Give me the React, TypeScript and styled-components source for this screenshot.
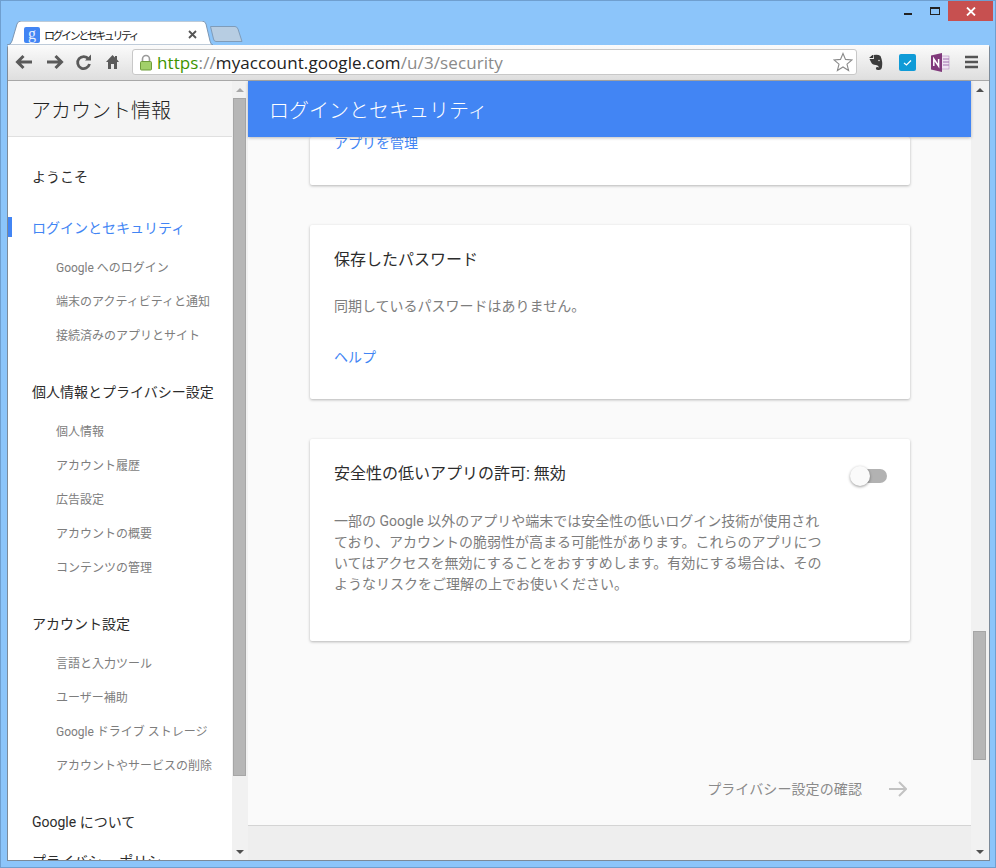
import React from 'react';
import styled, {createGlobalStyle} from 'styled-components';

const GlobalStyle = createGlobalStyle`
    html, body {
        margin: 0;
        padding: 0;
        background: #8cc5fa;
    }
    * {
        box-sizing: border-box;
    }
`;

const Frame = styled.div`
    width: 996px;
    height: 868px;
    display: flex;
    flex-direction: column;
    padding: 0 5px 6px 6px;
    background: #8cc5fa;
    border: 1px solid #6f9fcf;
    font-family: Roboto, "Noto Sans CJK JP", sans-serif;
    overflow: hidden;
`;

const TitleBar = styled.div`
    height: 44px;
    flex: none;
    display: flex;
    justify-content: space-between;
    align-items: flex-start;
`;

const TabStrip = styled.div`
    display: flex;
    align-items: flex-end;
    height: 44px;
    margin-left: -1px;
`;

const Tab = styled.div`
    position: relative;
    width: 207px;
    height: 24px;
    padding: 3px 16px 0 18px;
    display: flex;
    align-items: center;
    gap: 4px;
`;

const TabShape = styled.svg`
    position: absolute;
    left: 0;
    top: 0;
`;

const Favicon = styled.div`
    position: relative;
    width: 16px;
    height: 16px;
    background: #4285f4;
    border-radius: 2px;
    color: #e8f0fe;
    font: 400 16px/14px "Liberation Serif", serif;
    text-align: center;
`;

const TabTitle = styled.span`
    position: relative;
    flex: 1;
    font-size: 11px;
    letter-spacing: -2.45px;
    color: #222;
    white-space: nowrap;
`;

const TabClose = styled.svg`
    position: relative;
`;

const NewTab = styled.svg`
    margin-left: -3px;
    margin-bottom: 3px;
`;

const WindowButtons = styled.div`
    display: flex;
    align-items: flex-start;
    margin-right: -3px;
`;

const WindowGlyph = styled.svg`
    width: 26px;
    height: 20px;
`;

const CloseButton = styled.div`
    width: 45px;
    height: 20px;
    background: #c75050;
    display: flex;
    align-items: center;
    justify-content: center;
`;

const Browser = styled.div`
    flex: 1;
    min-height: 0;
    display: flex;
    flex-direction: column;
    border: 1px solid #7c8a99;
    border-top: none;
    border-radius: 3px 3px 0 0;
    background: #fff;
`;

const Toolbar = styled.div`
    height: 36px;
    flex: none;
    display: flex;
    align-items: center;
    padding: 0 6px 1px 6px;
    background: linear-gradient(#fbfbfb, #dedede);
    border-bottom: 1px solid #a8a8a8;
`;

const NavButton = styled.svg`
    width: 29px;
    height: 24px;
    flex: none;
`;

const Omnibox = styled.div`
    width: 725px;
    height: 26px;
    margin-left: 2px;
    display: flex;
    align-items: center;
    padding: 0 3px 0 6px;
    background: #fff;
    border: 1px solid #c8c8c8;
    border-radius: 3px;
`;

const Url = styled.div`
    flex: 1;
    margin-left: 4px;
    font-family: "Open Sans", sans-serif;
    font-size: 17px;
    letter-spacing: 0.1px;
    white-space: nowrap;
    color: #222;
`;

const UrlPart = styled.span<{$tone: 'green' | 'gray'}>`
    color: ${p => (p.$tone === 'green' ? '#3d9400' : '#8a8a8a')};
`;

const Extensions = styled.div`
    display: flex;
    align-items: center;
    gap: 15px;
    margin-left: 11px;
`;

const Viewport = styled.div`
    flex: 1;
    min-height: 0;
    display: flex;
`;

const Sidebar = styled.aside`
    width: 224px;
    flex: none;
    display: flex;
    flex-direction: column;
    overflow: hidden;
    background: #fff;
`;

const SidebarHeader = styled.div`
    height: 56px;
    flex: none;
    padding: 2px 0 0 23px;
    display: flex;
    align-items: center;
    background: #f5f5f5;
    border-bottom: 1px solid #e0e0e0;
    font-size: 20px;
    font-weight: 300;
    color: #212121;
`;

const SidebarList = styled.div`
    padding-top: 22px;
`;

const NavGroup = styled.div<{$gap?: number}>`
    margin-bottom: ${p => p.$gap ?? 23}px;
`;

const NavHead = styled.div<{$active?: boolean}>`
    position: relative;
    height: 34px;
    margin-bottom: 5px;
    padding-left: 24px;
    display: flex;
    align-items: center;
    font-size: 14px;
    white-space: nowrap;
    color: ${p => (p.$active ? '#4285f4' : '#2c2c2c')};

    &::before {
        content: '';
        display: ${p => (p.$active ? 'block' : 'none')};
        position: absolute;
        left: 0;
        top: 7px;
        width: 4px;
        height: 20px;
        background: #4285f4;
    }
`;

const NavSub = styled.div`
    height: 34px;
    padding-left: 48px;
    display: flex;
    align-items: center;
    font-size: 12px;
    white-space: nowrap;
    color: #7d7d7d;
`;

const Scrollbar = styled.div<{$width: number}>`
    width: ${p => p.$width}px;
    flex: none;
    display: flex;
    flex-direction: column;
    background: #f1f1f1;
`;

const ScrollArrow = styled.div<{$down?: boolean; $pale?: boolean}>`
    height: 17px;
    flex: none;
    display: flex;
    align-items: center;
    justify-content: center;

    &::before {
        content: '';
        border-left: 4px solid transparent;
        border-right: 4px solid transparent;
        ${p => (p.$down ? 'border-top' : 'border-bottom')}: 4px solid ${p => (p.$pale ? '#a8a8a8' : '#505050')};
    }
`;

const ScrollTrack = styled.div<{$inset: number}>`
    flex: 1;
    min-height: 0;
    padding-left: ${p => p.$inset}px;
`;

const ScrollThumb = styled.div<{$top: number; $height: number}>`
    width: 13px;
    height: ${p => p.$height}px;
    margin-top: ${p => p.$top}px;
    background: #b6b6b6;
    border: 1px solid #a6a6a6;
`;

const Main = styled.main`
    flex: 1;
    min-width: 0;
    display: flex;
    flex-direction: column;
    background: #fafafa;
`;

const MainHeader = styled.header`
    position: relative;
    z-index: 1;
    height: 56px;
    flex: none;
    padding: 1px 0 0 21px;
    display: flex;
    align-items: center;
    background: #4285f4;
    box-shadow: 0 1px 3px rgba(0, 0, 0, 0.25);
    font-size: 20px;
    font-weight: 300;
    color: #fff;
`;

const MainBody = styled.div`
    flex: 1;
    min-height: 0;
    overflow: hidden;
    padding: 0 62px;
    display: flex;
    flex-direction: column;
    gap: 40px;
`;

const Card = styled.section<{$top?: number; $bottom?: number}>`
    width: 600px;
    flex: none;
    padding: ${p => p.$top ?? 23}px 24px ${p => p.$bottom ?? 31}px;
    background: #fff;
    border-radius: 2px;
    box-shadow: 0 1px 3px rgba(0, 0, 0, 0.28);
`;

const CardTitle = styled.h2`
    margin: 0;
    font-size: 16px;
    font-weight: 400;
    line-height: 24px;
    color: #2c2c2c;
`;

const CardText = styled.p<{$gap?: number}>`
    margin: ${p => p.$gap ?? 25}px 0 0;
    font-size: 14px;
    line-height: 21px;
    color: #7d7d7d;
    white-space: nowrap;
`;

const CardLink = styled.a<{$tight?: boolean}>`
    display: block;
    margin-top: ${p => (p.$tight ? -4 : 30)}px;
    font-size: 14px;
    line-height: 21px;
    color: #4285f4;
`;

const TitleRow = styled.div`
    display: flex;
    justify-content: space-between;
    align-items: center;
`;

const Toggle = styled.div`
    position: relative;
    width: 37px;
    height: 20px;
    margin: 4px -1px 0 0;
    display: flex;
    align-items: center;
    justify-content: flex-end;
`;

const ToggleTrack = styled.div`
    width: 30px;
    height: 14px;
    background: #b2b2b2;
    border-radius: 7px;
`;

const ToggleThumb = styled.div`
    position: absolute;
    left: 0;
    top: 0;
    width: 20px;
    height: 20px;
    background: #fafafa;
    border-radius: 50%;
    box-shadow: 0 1px 3px rgba(0, 0, 0, 0.4);
`;

const NextLink = styled.div`
    margin-top: 96px;
    width: 597px;
    flex: none;
    display: flex;
    justify-content: flex-end;
    align-items: center;
    gap: 27px;
    font-size: 14px;
    line-height: 24px;
    letter-spacing: 0.1px;
    color: #8a8a8a;
`;

const MainFooter = styled.footer`
    height: 35px;
    flex: none;
    background: #eeeeee;
    border-top: 1px solid #d4d4d4;
`;

const BackIcon = () => (
    <NavButton viewBox="0 0 29 24">
        <path d="M9.5 6 L3.5 12 L9.5 18 M4 12 H18" fill="none" stroke="#5a5a5a" strokeWidth="3" />
    </NavButton>
);

const ForwardIcon = () => (
    <NavButton viewBox="0 0 29 24">
        <path d="M12.5 6 L18.5 12 L12.5 18 M4 12 H18" fill="none" stroke="#5a5a5a" strokeWidth="3" />
    </NavButton>
);

const ReloadIcon = () => (
    <NavButton viewBox="0 0 29 24">
        <path d="M16.5 9 A6 6 0 1 0 17.5 14" fill="none" stroke="#5a5a5a" strokeWidth="2.8" />
        <path d="M13 10.5 H19 V4.5 Z" fill="#5a5a5a" />
    </NavButton>
);

const HomeIcon = () => (
    <NavButton viewBox="0 0 29 24">
        <path d="M11.5 5 L5 12 H7 V19 H10 V14 H13 V19 H16 V12 H18 L16 9.5 V6 H14 V7.5 Z" fill="#5a5a5a" />
    </NavButton>
);

const LockIcon = () => (
    <svg width="14" height="17" viewBox="0 0 14 17">
        <path d="M3.5 8 V5 A3.5 3.5 0 0 1 10.5 5 V8" fill="none" stroke="#9a9a9a" strokeWidth="1.6" />
        <rect x="1.5" y="7.5" width="11" height="8.5" rx="1" fill="#a2d06a" stroke="#6f9d3c" />
    </svg>
);

const StarIcon = () => (
    <svg width="20" height="20" viewBox="0 0 20 20">
        <path d="M10 1.5 L12.5 7.4 L19 7.9 L14 12.1 L15.6 18.5 L10 15 L4.4 18.5 L6 12.1 L1 7.9 L7.5 7.4 Z" fill="#fff" stroke="#8a8a8a" strokeWidth="1.1" />
    </svg>
);

const EvernoteIcon = () => (
    <svg width="16" height="17" viewBox="0 0 16 17">
        <path d="M1 4 L4.5 1 H5 V4 H1.5 Z" fill="#333" />
        <path d="M5.5 1 Q10 0 12.5 2 Q15 8 14 13 Q13.5 16.5 10 16 Q7.5 16 8 13.5 Q9.5 12.5 11 13.5 Q10.5 11 8 11 Q4 11 3 8 L1.5 5 H6 Z" fill="#3c3c3c" />
        <circle cx="11" cy="6.5" r="0.8" fill="#ddd" />
    </svg>
);

const CheckIcon = () => (
    <svg width="17" height="17" viewBox="0 0 17 17">
        <rect width="17" height="17" rx="2" fill="#0f9bd7" />
        <path d="M5 9 L7.5 11 L12 6.5" fill="none" stroke="#fff" strokeWidth="1.3" />
    </svg>
);

const OneNoteIcon = () => (
    <svg width="19" height="19" viewBox="0 0 19 19">
        <rect x="9" y="3" width="9" height="13" fill="#efe3f2" stroke="#b48cc0" strokeWidth="0.6" />
        <path d="M12 6 H18 M12 9 H18 M12 12 H18" stroke="#a06fae" strokeWidth="1" />
        <path d="M0 2.5 L11 0 V19 L0 16.5 Z" fill="#80397b" />
        <path d="M2.8 13 V6 L7.6 13 V6" fill="none" stroke="#fff" strokeWidth="1.5" />
    </svg>
);

const MenuIcon = () => (
    <svg width="14" height="14" viewBox="0 0 14 14">
        <path d="M0 2 H13 M0 7 H13 M0 12 H13" stroke="#555" strokeWidth="2.4" />
    </svg>
);

const PageScrollbar = ({width, inset, top, height}: {width: number; inset: number; top: number; height: number}) => (
    <Scrollbar $width={width}>
        <ScrollArrow $pale={width === 16} />
        <ScrollTrack $inset={inset}>
            <ScrollThumb $top={top} $height={height} />
        </ScrollTrack>
        <ScrollArrow $down />
    </Scrollbar>
);

const navGroups = [
    {head: 'ログインとセキュリティ', active: true, subs: ['Google へのログイン', '端末のアクティビティと通知', '接続済みのアプリとサイト']},
    {head: '個人情報とプライバシー設定', subs: ['個人情報', 'アカウント履歴', '広告設定', 'アカウントの概要', 'コンテンツの管理']},
    {head: 'アカウント設定', subs: ['言語と入力ツール', 'ユーザー補助', 'Google ドライブ ストレージ', 'アカウントやサービスの削除']},
];

const App = () => {
    return (
        <Frame>
            <GlobalStyle />
            <TitleBar>
                <TabStrip>
                    <Tab>
                        <TabShape width="207" height="24" viewBox="0 0 207 24">
                            <path d="M1 24 Q5 24 6 20 L11 3 Q12 0 15 0 H196 Q199 0 200 3 L204 20 Q205 24 207 24 Z" fill="#fff" stroke="#7d97b3" />
                        </TabShape>
                        <Favicon>g</Favicon>
                        <TabTitle>ログインとセキュリティ</TabTitle>
                        <TabClose width="9" height="9" viewBox="0 0 9 9">
                            <path d="M1 1 L8 8 M8 1 L1 8" stroke="#555" strokeWidth="1.8" />
                        </TabClose>
                    </Tab>
                    <NewTab width="33" height="16" viewBox="0 0 33 16">
                        <path d="M0.5 0.5 H25 Q27 0.5 28 3 L32 15.5 H6 Q4 15.5 3.5 13 Z" fill="#b7cde2" stroke="#7f9cb9" />
                    </NewTab>
                </TabStrip>
                <WindowButtons>
                    <WindowGlyph viewBox="0 0 26 20">
                        <rect x="8" y="12" width="8" height="2" fill="#222" />
                    </WindowGlyph>
                    <WindowGlyph viewBox="0 0 26 20">
                        <rect x="8.5" y="6.5" width="9" height="7" fill="none" stroke="#222" />
                        <rect x="8" y="6" width="10" height="2" fill="#222" />
                    </WindowGlyph>
                    <CloseButton>
                        <svg width="10" height="9" viewBox="0 0 10 9">
                            <path d="M1 0.5 L9 8.5 M9 0.5 L1 8.5" stroke="#fff" strokeWidth="1.8" />
                        </svg>
                    </CloseButton>
                </WindowButtons>
            </TitleBar>
            <Browser>
                <Toolbar>
                    <BackIcon />
                    <ForwardIcon />
                    <ReloadIcon />
                    <HomeIcon />
                    <Omnibox>
                        <LockIcon />
                        <Url>
                            <UrlPart $tone="green">https</UrlPart>
                            <UrlPart $tone="gray">://</UrlPart>
                            myaccount.google.com
                            <UrlPart $tone="gray">/u/3/security</UrlPart>
                        </Url>
                        <StarIcon />
                    </Omnibox>
                    <Extensions>
                        <EvernoteIcon />
                        <CheckIcon />
                        <OneNoteIcon />
                        <MenuIcon />
                    </Extensions>
                </Toolbar>
                <Viewport>
                    <Sidebar>
                        <SidebarHeader>アカウント情報</SidebarHeader>
                        <SidebarList>
                            <NavGroup $gap={17}>
                                <NavHead>ようこそ</NavHead>
                            </NavGroup>
                            {navGroups.map(group => (
                                <NavGroup key={group.head}>
                                    <NavHead $active={group.active}>{group.head}</NavHead>
                                    {group.subs.map(sub => (
                                        <NavSub key={sub}>{sub}</NavSub>
                                    ))}
                                </NavGroup>
                            ))}
                            <NavHead>Google について</NavHead>
                            <NavHead>プライバシー ポリシー</NavHead>
                        </SidebarList>
                    </Sidebar>
                    <PageScrollbar width={16} inset={1} top={0} height={678} />
                    <Main>
                        <MainHeader>ログインとセキュリティ</MainHeader>
                        <MainBody>
                            <Card $top={0} $bottom={31}>
                                <CardLink $tight>アプリを管理</CardLink>
                            </Card>
                            <Card>
                                <CardTitle>保存したパスワード</CardTitle>
                                <CardText $gap={24}>同期しているパスワードはありません。</CardText>
                                <CardLink>ヘルプ</CardLink>
                            </Card>
                            <Card $bottom={46}>
                                <TitleRow>
                                    <CardTitle>安全性の低いアプリの許可: 無効</CardTitle>
                                    <Toggle>
                                        <ToggleTrack />
                                        <ToggleThumb />
                                    </Toggle>
                                </TitleRow>
                                <CardText>
                                    一部の Google 以外のアプリや端末では安全性の低いログイン技術が使用され
                                    <br />
                                    ており、アカウントの脆弱性が高まる可能性があります。これらのアプリにつ
                                    <br />
                                    いてはアクセスを無効にすることをおすすめします。有効にする場合は、その
                                    <br />
                                    ようなリスクをご理解の上でお使いください。
                                </CardText>
                            </Card>
                            <NextLink>
                                プライバシー設定の確認
                                <svg width="18" height="16" viewBox="0 0 18 16">
                                    <path d="M10 1 L17 8 L10 15 M0 8 H17" fill="none" stroke="#c2c2c2" strokeWidth="2" />
                                </svg>
                            </NextLink>
                        </MainBody>
                        <MainFooter />
                    </Main>
                    <PageScrollbar width={18} inset={2} top={533} height={129} />
                </Viewport>
            </Browser>
        </Frame>
    );
};

export default App;
